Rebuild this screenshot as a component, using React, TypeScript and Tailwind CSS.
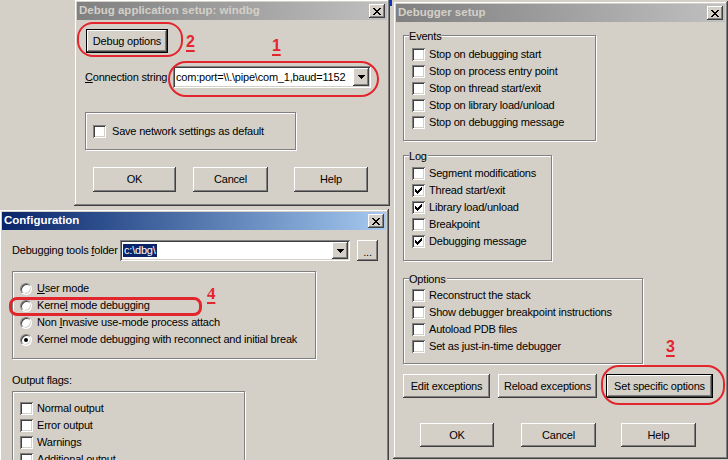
import React from "react";

const frame =
  "shadow-[inset_-1px_-1px_0_#404040,inset_1px_1px_0_#d4d0c8,inset_-2px_-2px_0_#808080,inset_2px_2px_0_#ffffff]";
const raised =
  "shadow-[inset_-1px_-1px_0_#404040,inset_1px_1px_0_#ffffff,inset_-2px_-2px_0_#808080]";
const sunken =
  "shadow-[inset_1px_1px_0_#808080,inset_-1px_-1px_0_#ffffff,inset_2px_2px_0_#404040,inset_-2px_-2px_0_#d4d0c8]";

function XGlyph() {
  return (
    <svg width="8" height="7" viewBox="0 0 8 7" shapeRendering="crispEdges">
      <path
        fill="#000"
        d="M0 0h2v1h-2z M6 0h2v1h-2z M1 1h2v1h-2z M5 1h2v1h-2z M2 2h4v1h-4z M3 3h2v1h-2z M2 4h4v1h-4z M1 5h2v1h-2z M5 5h2v1h-2z M0 6h2v1h-2z M6 6h2v1h-2z"
      />
    </svg>
  );
}

function Arrow() {
  return (
    <svg width="7" height="4" viewBox="0 0 7 4" shapeRendering="crispEdges">
      <path fill="#000" d="M0 0h7v1h-7z M1 1h5v1h-5z M2 2h3v1h-3z M3 3h1v1h-1z" />
    </svg>
  );
}

function CheckGlyph() {
  return (
    <svg width="7" height="7" viewBox="0 0 7 7" shapeRendering="crispEdges">
      <path
        fill="#000"
        d="M6 0h1v1h-1z M5 1h2v1h-2z M0 2h1v1h-1z M4 2h3v1h-3z M0 3h2v1h-2z M3 3h3v1h-3z M0 4h5v1h-5z M1 5h3v1h-3z M2 6h1v1h-1z"
      />
    </svg>
  );
}

function TitleBar({ title, active }: { title: string; active?: boolean }) {
  return (
    <div
      className={`h-[18px] shrink-0 flex items-center justify-between pl-[2px] pr-[2px] ${
        active
          ? "bg-linear-to-r from-[#0a246a] to-[#a6caf0] text-white"
          : "bg-linear-to-r from-[#808080] to-[#c0c0c0] text-[#d4d0c8]"
      }`}
    >
      <span className="font-bold text-[11.5px] tracking-normal whitespace-nowrap">{title}</span>
      <div className={`w-[16px] h-[14px] bg-[#d4d0c8] flex items-center justify-center ${raised}`}>
        <XGlyph />
      </div>
    </div>
  );
}

function Btn({ label, className, def }: { label: React.ReactNode; className?: string; def?: boolean }) {
  return (
    <div
      className={`flex items-center justify-center bg-[#d4d0c8] text-black whitespace-nowrap ${raised} ${
        def ? "border border-black" : ""
      } ${className ?? ""}`}
    >
      {label}
    </div>
  );
}

function Check({ checked }: { checked?: boolean }) {
  return (
    <div className={`w-[13px] h-[13px] shrink-0 bg-white flex items-center justify-center ${sunken}`}>
      {checked ? <CheckGlyph /> : null}
    </div>
  );
}

function Radio({ on }: { on?: boolean }) {
  return (
    <div className="relative w-[12px] h-[12px] shrink-0 rounded-full bg-white border border-t-[#808080] border-l-[#808080] border-r-white border-b-white shadow-[inset_1px_1px_0_#404040,inset_-1px_-1px_0_#d4d0c8] flex items-center justify-center">
      {on ? <div className="w-[4px] h-[4px] rounded-full bg-black" /> : null}
    </div>
  );
}

function Combo({ children, className }: { children: React.ReactNode; className?: string }) {
  return (
    <div className={`flex items-stretch bg-white p-[2px] ${sunken} ${className ?? ""}`}>
      <div className="flex-1 overflow-hidden whitespace-nowrap flex items-center pl-[1px]">{children}</div>
      <div className={`w-[16px] shrink-0 bg-[#d4d0c8] flex items-center justify-center ${raised}`}>
        <Arrow />
      </div>
    </div>
  );
}

function Group({
  title,
  className,
  children,
}: {
  title?: string;
  className?: string;
  children: React.ReactNode;
}) {
  return (
    <div
      className={`relative shrink-0 border border-[#808080] shadow-[inset_1px_1px_0_#ffffff,1px_1px_0_#ffffff] ${
        className ?? ""
      }`}
    >
      {title ? (
        <span className="absolute left-[5px] top-[-6px] bg-[#d4d0c8] pr-[1px] leading-[13px]">{title}</span>
      ) : null}
      {children}
    </div>
  );
}

function CheckRow({ label, checked }: { label: string; checked?: boolean }) {
  return (
    <div className="flex items-center h-[17px] gap-[4px]">
      <Check checked={checked} />
      <span className="whitespace-nowrap">{label}</span>
    </div>
  );
}

function RadioRow({ label, on }: { label: React.ReactNode; on?: boolean }) {
  return (
    <div className="flex items-center h-[17px] gap-[5px]">
      <Radio on={on} />
      <span className="whitespace-nowrap">{label}</span>
    </div>
  );
}

export default function App() {
  return (
    <div className="relative w-[728px] h-[460px] overflow-hidden bg-[#d4d0c8] font-['Liberation_Sans',Arial,sans-serif] text-[11px] tracking-[-0.2px] leading-none text-black">
      {/* small blue sliver behind windows */}
      <div className="absolute left-[390px] top-0 w-[2px] h-[6px] bg-[#1030c0]" />

      {/* Debug application setup window */}
      <div className={`absolute left-[74px] top-[-1px] w-[316px] h-[207px] flex flex-col bg-[#d4d0c8] p-[3px] ${frame}`}>
        <TitleBar title="Debug application setup: windbg" />
        <div className="flex flex-col">
          <Btn label="Debug options" def className="ml-[9px] mt-[9px] w-[82px] h-[24px]" />
          <div className="mt-[13px] ml-[8px] flex items-center h-[22px]">
            <span className="w-[88px] whitespace-nowrap">
              <span className="underline">C</span>onnection string
            </span>
            <Combo className="w-[198px] h-[22px]">{"com:port=\\\\.\\pipe\\com_1,baud=1152"}</Combo>
          </div>
          <Group className="mt-[24px] ml-[8px] w-[211px] h-[38px] flex items-center pl-[7px] gap-[6px]">
            <Check />
            <span className="whitespace-nowrap">Save network settings as default</span>
          </Group>
          <div className="mt-[17px] flex h-[25px]">
            <Btn label="OK" className="ml-[16px] w-[83px]" />
            <Btn label="Cancel" className="ml-[17px] w-[75px]" />
            <Btn label="Help" className="ml-[26px] w-[74px]" />
          </div>
        </div>
      </div>

      {/* Debugger setup window */}
      <div className={`absolute left-[393px] top-[1px] w-[335px] h-[458px] flex flex-col bg-[#d4d0c8] p-[3px] ${frame}`}>
        <TitleBar title="Debugger setup" />
        <div className="flex flex-col pl-[7px]">
          <Group title="Events" className="mt-[13px] w-[193px] h-[106px] pt-[10px] pl-[8px]">
            <CheckRow label="Stop on debugging start" />
            <CheckRow label="Stop on process entry point" />
            <CheckRow label="Stop on thread start/exit" />
            <CheckRow label="Stop on library load/unload" />
            <CheckRow label="Stop on debugging message" />
          </Group>
          <Group title="Log" className="mt-[14px] w-[149px] h-[106px] pt-[9px] pl-[8px]">
            <CheckRow label="Segment modifications" />
            <CheckRow label="Thread start/exit" checked />
            <CheckRow label="Library load/unload" checked />
            <CheckRow label="Breakpoint" />
            <CheckRow label="Debugging message" checked />
          </Group>
          <Group title="Options" className="mt-[17px] w-[240px] h-[86px] pt-[8px] pl-[8px]">
            <CheckRow label="Reconstruct the stack" />
            <CheckRow label="Show debugger breakpoint instructions" />
            <CheckRow label="Autoload PDB files" />
            <CheckRow label="Set as just-in-time debugger" />
          </Group>
          <div className="mt-[10px] flex h-[24px]">
            <Btn label="Edit exceptions" className="w-[87px]" />
            <Btn label="Reload exceptions" className="ml-[8px] w-[99px]" />
            <Btn label="Set specific options" def className="ml-[9px] w-[107px]" />
          </div>
          <div className="mt-[25px] flex h-[24px]">
            <Btn label="OK" className="ml-[17px] w-[74px]" />
            <Btn label="Cancel" className="ml-[27px] w-[75px]" />
            <Btn label="Help" className="ml-[25px] w-[75px]" />
          </div>
        </div>
      </div>

      {/* Configuration window */}
      <div className={`absolute left-[-1px] top-[209px] w-[390px] h-[300px] flex flex-col bg-[#d4d0c8] p-[3px] ${frame}`}>
        <TitleBar title="Configuration" active />
        <div className="flex flex-col pl-[10px]">
          <div className="mt-[10px] flex items-center h-[21px]">
            <span className="w-[108px] whitespace-nowrap">
              Debugging tools <span className="underline">f</span>older
            </span>
            <Combo className="w-[230px] h-[21px]">
              <span className="bg-[#0a246a] text-white leading-[13px] px-[1px]">{"c:\\dbg\\"}</span>
            </Combo>
            <Btn label="..." className="ml-[7px] w-[21px] h-[21px] items-end pb-[3px]" />
          </div>
          <Group className="mt-[10px] w-[304px] h-[88px] pt-[8px] pl-[7px]">
            <RadioRow
              label={
                <>
                  <span className="underline">U</span>ser mode
                </>
              }
            />
            <RadioRow
              label={
                <>
                  Kerne<span className="underline">l</span> mode debugging
                </>
              }
            />
            <RadioRow
              label={
                <>
                  Non <span className="underline">I</span>nvasive use-mode process attach
                </>
              }
            />
            <RadioRow label="Kernel mode debugging with reconnect and initial break" on />
          </Group>
          <div className="mt-[15px] h-[13px] leading-[13px]">Output flags:</div>
          <Group className="mt-[4px] w-[233px] h-[100px] pt-[8px] pl-[7px]">
            <CheckRow label="Normal output" />
            <CheckRow label="Error output" />
            <CheckRow label="Warnings" />
            <CheckRow label="Additional output" />
          </Group>
        </div>
      </div>

      {/* Red annotations */}
      <div className="absolute left-[77px] top-[22px] w-[106px] h-[35px] border-[2.5px] border-[#e3262e] rounded-[16px]" />
      <div className="absolute left-[186px] top-[34px] text-[#e3262e] font-bold text-[16px] leading-[16px] underline decoration-2 underline-offset-[3px]">
        2
      </div>
      <div className="absolute left-[272px] top-[38px] text-[#e3262e] font-bold text-[16px] leading-[16px] underline decoration-2 underline-offset-[3px]">
        1
      </div>
      <div className="absolute left-[168px] top-[61px] w-[211px] h-[36px] border-[2.5px] border-[#e3262e] rounded-[18px]" />
      <div className="absolute left-[666px] top-[339px] text-[#e3262e] font-bold text-[16px] leading-[16px] underline decoration-2 underline-offset-[3px]">
        3
      </div>
      <div className="absolute left-[601px] top-[365px] w-[124px] h-[40px] border-[2.5px] border-[#e3262e] rounded-[18px]" />
      <div className="absolute left-[9px] top-[297px] w-[193px] h-[19px] border-[3px] border-[#e3262e] rounded-[8px]" />
      <div className="absolute left-[207px] top-[286px] text-[#e3262e] font-bold font-['Liberation_Serif',serif] text-[17px] leading-[16px] underline decoration-2 underline-offset-[3px]">
        4
      </div>
    </div>
  );
}
